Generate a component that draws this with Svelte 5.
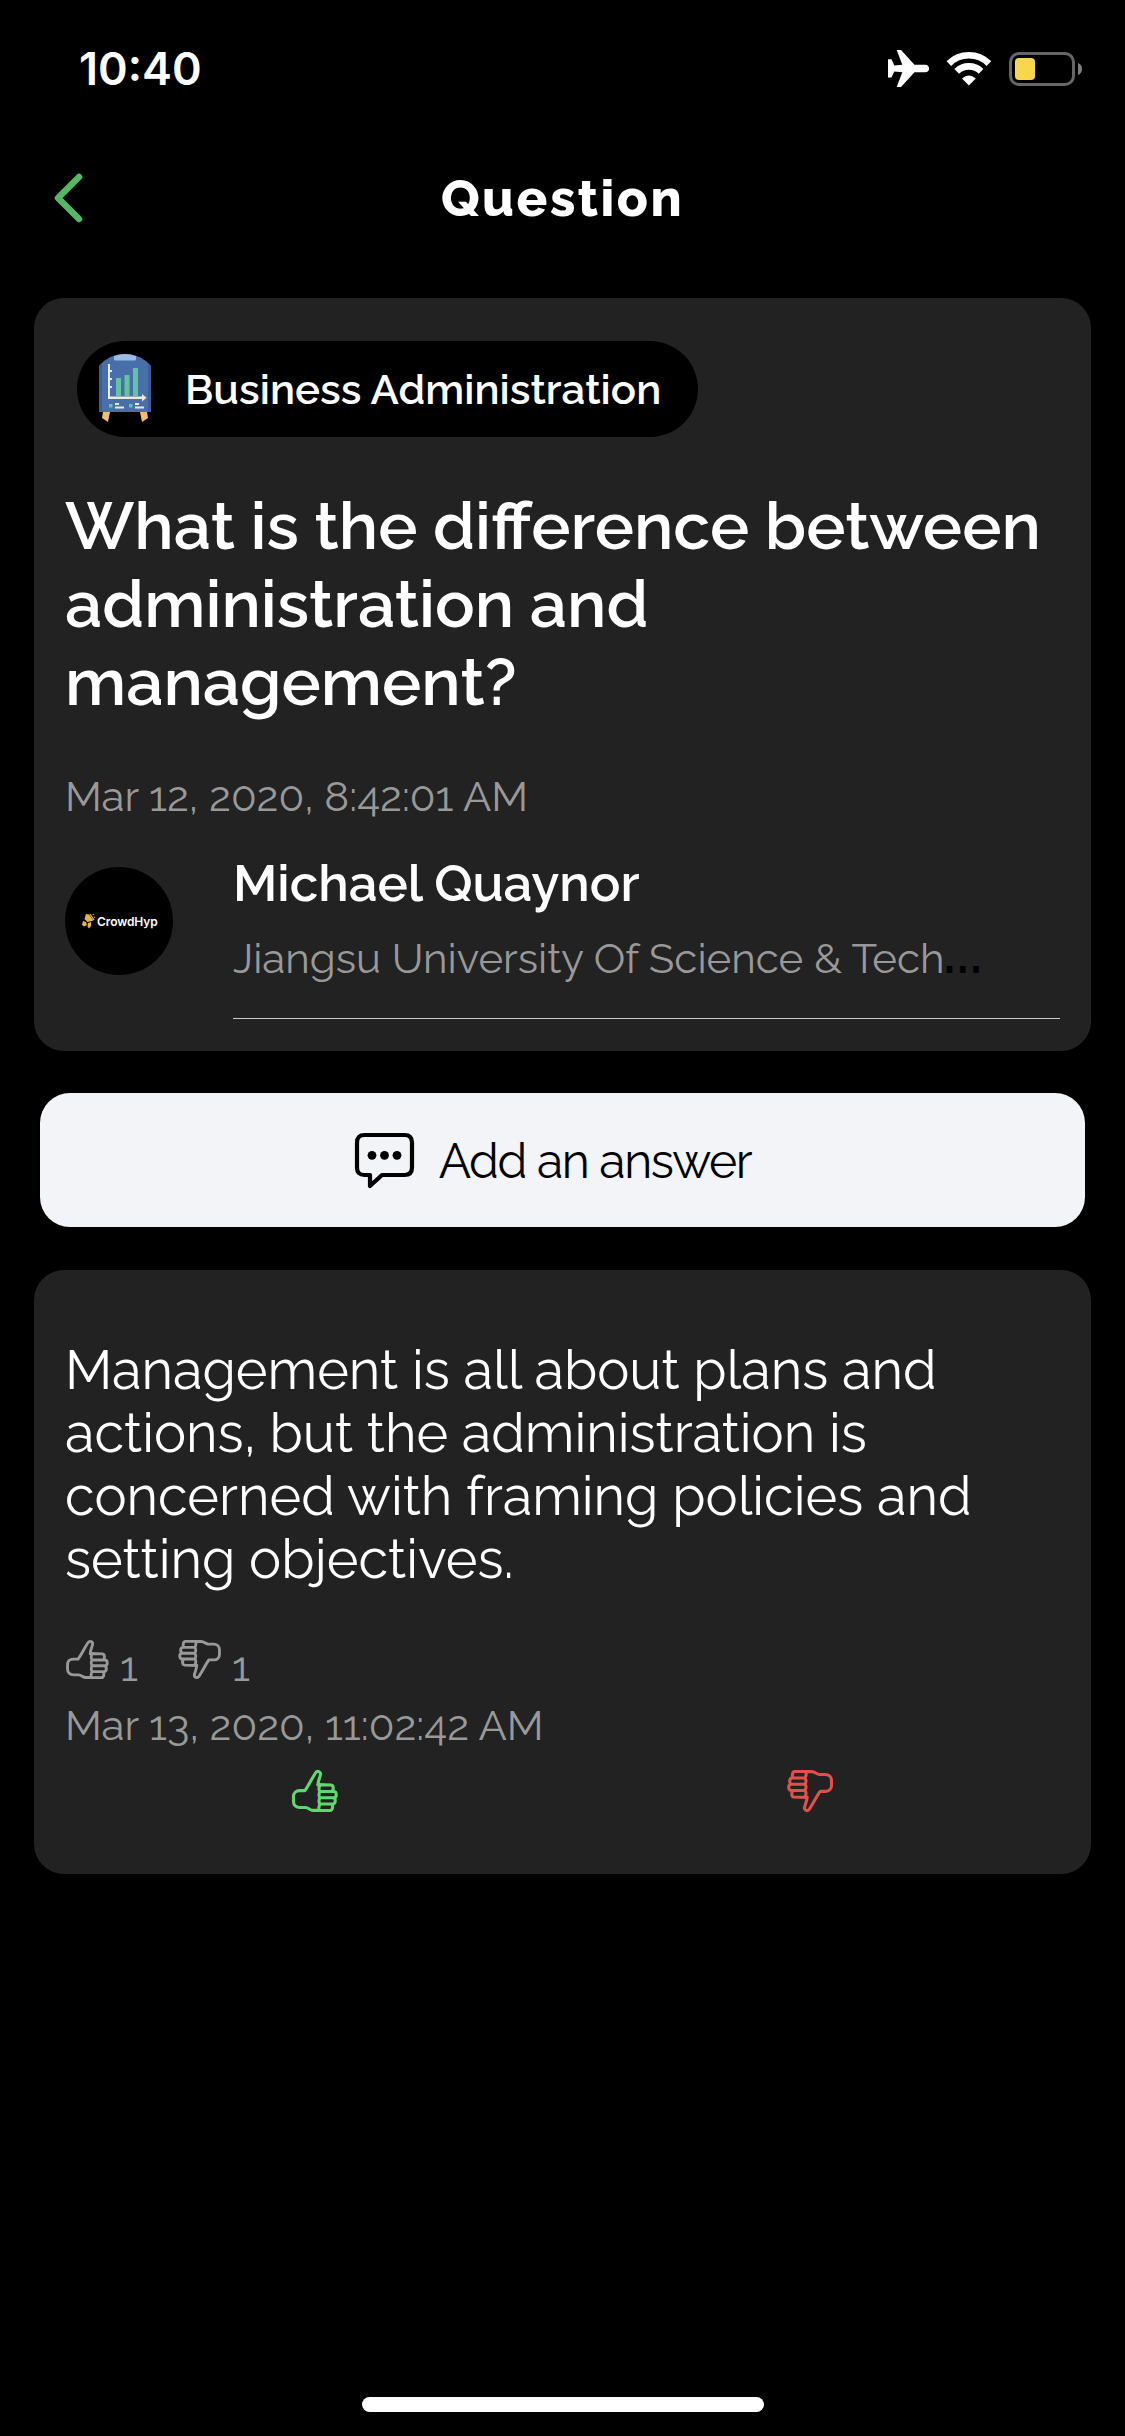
<script>
  const question = {
    category: 'Business Administration',
    lines: ['What is the difference between', 'administration and', 'management?'],
    date: 'Mar 12, 2020, 8:42:01 AM',
    author: 'Michael Quaynor',
    school: 'Jiangsu University Of Science & Tech'
  }

  const answer = {
    lines: [
      'Management is all about plans and',
      'actions, but the administration is',
      'concerned with framing policies and',
      'setting objectives.'
    ],
    date: 'Mar 13, 2020, 11:02:42 AM',
    likes: 1,
    dislikes: 1
  }
</script>

{#snippet thumb(kind)}
  <svg class="thumb {kind}" viewBox="0 0 46 42">
    <path d="M27.5 40.4H21c-3 0-4.500-2.900-7.500-2.900H8c-4 0-6.500-2.500-6.500-6v-5c0-3.500 2.500-5.900 6-5.900h5.300c2-2 6.200-10.600 10.700-17.600 2-3 5.500-1 5 1.500-.6 3-2.500 6-2.500 10.500" />
    <path d="M26 14.600l13 .4c3 .2 3 6.300 0 6.500H28.500c-2-.5-2-5.500 0-6.500M28.500 21.500H42c3 .3 3 6 0 6.200H28.500c-2-.7-2-5.200 0-6.200M28.500 27.700H41c3 .3 3 6 0 6.300H28.500c-2-.7-2-5.300 0-6.300M28.500 34H39c2.500.3 2 6.600-1 6.500H27.500c-1-1-1-5.500 1-6.500" />
  </svg>
{/snippet}

<div class="screen">
  <div class="status">
    <span class="time">10:40</span>
    <div class="indicators">
      <svg class="plane" viewBox="0 0 41 37">
        <path d="M26.500 14.700H37c5.500 0 5.500 7.600 0 7.600H26.500L13 37H8.700l5.600-14.700-8-.8L3.500 27.500H0V9.300h3.500l2.800 6.200 8-.8L8.700 0H13z" />
      </svg>
      <svg class="wifi" viewBox="0 0 46 34">
        <path class="arc" d="M2.900 11.600a28.300 28.300 0 0 1 40 0M10.700 19.400a17.300 17.300 0 0 1 24.400 0" />
        <path d="M16 26.500q6.900-6 13.800 0l-6.900 7z" />
      </svg>
      <svg class="battery" viewBox="0 0 74 34">
        <rect class="case" x="1.500" y="1.500" width="63" height="31" rx="8.500" />
        <rect class="level" x="6" y="6" width="20" height="22" rx="4" />
        <path class="nub" d="M69 11q4 1.500 4 6t-4 6z" />
      </svg>
    </div>
  </div>

  <header>
    <svg class="back" viewBox="0 0 30 50">
      <path d="M25 4L4 25l21 21" />
    </svg>
    <h1>Question</h1>
  </header>

  <section class="card question">
    <div class="category">
      <svg viewBox="0 0 52 68">
        <path fill="#f2bb77" d="M4 58h7l-2 10-6-4zM41 58h7l1 6-6 4z" />
        <path fill="#486fa9" d="M0 58V12Q10 0 26 0t26 12v46z" />
        <path fill="#3d5f96" d="M0 58V12l3-3v49zM49 9l3 3v46h-3z" />
        <path fill="#9bbbe3" d="M15 2q11-4 22 0v3q0 1.500-1.500 1.500h-19Q15 6.500 15 5z" />
        <path fill="#62c4a2" d="M17 24h5v18h-5zM25.500 21h5v21h-5zM34 14h5v28h-5zM10 50h3.500v3.500H10zM30 50h3.500v3.500H30z" />
        <path fill="#ece9dd" d="M9 10h2v32.500h32V40l4.500 3.700L43 47.500v-2.500H9zM11 16h2v2h-2zM11 24h2v2h-2zM11 32h2v2h-2zM16 49h4v2h-4zM16 52.500h9v2h-9zM36 49h4v2h-4zM36 52.500h9v2h-9z" />
      </svg>
      <span>{question.category}</span>
    </div>
    <h2>
      {#each question.lines as line}
        <span>{line}</span>
      {/each}
    </h2>
    <p class="date">{question.date}</p>
    <div class="author">
      <div class="avatar">
        <svg viewBox="0 0 14 16">
          <path d="M4 1l3 .5 4.500 6-6 1.500-3-3zM1 8l3 1 1 3-3 1.500L0 12zM6 10l3-1v4l-2 2.500-1.500-2z" />
          <path class="spark" d="M8 1l4 6M11 1l.5 1M13 4l-1 .5" />
        </svg>
        <span>CrowdHyp</span>
      </div>
      <div class="details">
        <p class="name">{question.author}</p>
        <p class="school">{question.school}<b>...</b></p>
      </div>
    </div>
  </section>

  <button>
    <svg viewBox="0 0 59 56">
      <path d="M9.500 2h40q7.500 0 7.500 7.500v25q0 7.500-7.500 7.500H27L15 53V42H9.500Q2 42 2 34.500v-25Q2 2 9.500 2z" />
      <circle cx="17" cy="22.300" r="4.400" />
      <circle cx="29.500" cy="22.300" r="4.400" />
      <circle cx="42" cy="22.300" r="4.400" />
    </svg>
    <span>Add an answer</span>
  </button>

  <section class="card answer">
    <p class="body">
      {#each answer.lines as line}
        <span>{line}</span>
      {/each}
    </p>
    <div class="votes">
      {@render thumb('up')}
      <span>{answer.likes}</span>
      {@render thumb('down')}
      <span>{answer.dislikes}</span>
    </div>
    <p class="date">{answer.date}</p>
    <div class="actions">
      <div class="like">{@render thumb('up')}</div>
      <div class="dislike">{@render thumb('down')}</div>
    </div>
  </section>

  <div class="home"></div>
</div>

<style>
  :global(body) {
    background: #000;
  }

  .screen {
    box-sizing: border-box;
    display: flex;
    flex-direction: column;
    width: 1125px;
    height: 2436px;
    background: #000;
    color: #fff;
    font-family: Raleway, Lato, sans-serif;
  }

  h1, h2, p {
    margin: 0;
  }

  svg {
    display: block;
    flex: none;
    overflow: visible;
  }

  .status {
    display: flex;
    align-items: center;
    justify-content: space-between;
    height: 137px;
    padding: 0 42px 0 79px;
  }

  .time {
    font: 600 45px Inter, sans-serif;
  }

  .indicators {
    display: flex;
    align-items: center;
    fill: #fff;
  }

  .plane {
    width: 41px;
    height: 37px;
    margin-right: 17px;
  }

  .wifi {
    width: 46px;
    height: 34px;
    margin-right: 17px;
  }

  .arc {
    fill: none;
    stroke: #fff;
    stroke-width: 6.6;
  }

  .battery {
    width: 74px;
    height: 34px;
  }

  .case {
    fill: none;
    stroke: #666;
    stroke-width: 3;
  }

  .level {
    fill: #f8d74a;
  }

  .nub {
    fill: #808080;
  }

  header {
    display: grid;
    grid-template-columns: 100px 1fr 100px;
    align-items: center;
    height: 122px;
  }

  .back {
    width: 30px;
    height: 50px;
    margin-left: 54px;
    fill: none;
    stroke: #53b965;
    stroke-width: 6.5;
    stroke-linecap: round;
    stroke-linejoin: round;
  }

  h1 {
    font-size: 51px;
    font-weight: 800;
    line-height: 60px;
    letter-spacing: 2.5px;
    text-align: center;
  }

  .card {
    box-sizing: border-box;
    margin: 0 34px;
    padding: 0 31px;
    border-radius: 30px;
    background: #222;
  }

  .question {
    height: 753px;
    margin-top: 39px;
    padding-top: 43px;
  }

  .category {
    box-sizing: border-box;
    display: flex;
    align-items: center;
    width: 621px;
    height: 96px;
    margin-left: 12px;
    padding-left: 22px;
    border-radius: 48px;
    background: #000;
    font-size: 42px;
    font-weight: 600;
    line-height: 50px;
    white-space: nowrap;
  }

  .category svg {
    width: 52px;
    height: 68px;
    margin: 0 34px 2px 0;
  }

  .category span {
    padding-top: 2px;
    letter-spacing: .06px;
  }

  h2 {
    margin-top: 50px;
    font-size: 66px;
    font-weight: 600;
    line-height: 78px;
    word-spacing: -.7px;
  }

  h2 span, .body span {
    display: block;
    white-space: nowrap;
  }

  .date {
    margin-top: 51px;
    color: #999;
    font-size: 42px;
    line-height: 50px;
  }

  .author {
    display: flex;
    margin-top: 31px;
  }

  .avatar {
    box-sizing: border-box;
    display: flex;
    align-items: center;
    flex: none;
    width: 108px;
    height: 108px;
    margin: 14px 60px 0 0;
    padding-left: 17px;
    border-radius: 50%;
    background: #000;
    font: 600 12px Inter, sans-serif;
    letter-spacing: -.1px;
  }

  .avatar svg {
    width: 14px;
    height: 16px;
    margin-right: 1px;
    fill: #e8b44a;
  }

  .spark {
    fill: none;
    stroke: #e8b44a;
    stroke-width: 1.3;
  }

  .details {
    flex: 1;
    border-bottom: 1px solid #ccc;
    padding-bottom: 34px;
    white-space: nowrap;
  }

  .name {
    font-size: 51px;
    font-weight: 600;
    line-height: 60px;
  }

  .school {
    margin-top: 21px;
    color: #999;
    font-size: 42px;
    line-height: 50px;
  }

  .school b {
    color: #000;
    font-weight: 800;
    letter-spacing: 3.2px;
  }

  button {
    display: flex;
    align-items: center;
    justify-content: center;
    height: 134px;
    margin: 42px 40px 43px;
    padding: 2px 19px 0 0;
    border: 0;
    border-radius: 30px;
    background: #f3f4f7;
    color: #000;
    font: inherit;
    font-size: 48px;
    letter-spacing: -1.35px;
  }

  button svg {
    width: 59px;
    height: 56px;
    margin-right: 25px;
  }

  button path {
    fill: none;
    stroke: #000;
    stroke-width: 4.2;
    stroke-linejoin: round;
  }

  .answer {
    height: 604px;
    padding-top: 69px;
  }

  .body {
    font-size: 54px;
    line-height: 63px;
  }

  .votes {
    display: flex;
    height: 50px;
    margin-top: 49px;
    padding-left: 1px;
    color: #999;
    font-size: 42px;
    line-height: 53px;
  }

  .votes span {
    width: 58px;
    padding-left: 11px;
  }

  .thumb {
    width: 46px;
    height: 42px;
    fill: none;
    stroke: currentColor;
    stroke-width: 3.1;
    stroke-linecap: round;
    stroke-linejoin: round;
  }

  .votes .thumb {
    width: 43px;
    height: 39px;
  }

  .down {
    transform: rotate(180deg);
  }

  .answer .date {
    margin-top: 11px;
  }

  .actions {
    display: grid;
    grid-template-columns: 1fr 1fr;
    justify-items: center;
    margin-top: 19px;
  }

  .like {
    padding-left: 2px;
    color: #5fd86f;
  }

  .dislike {
    padding-right: 2px;
    color: #e2504a;
  }

  .home {
    align-self: center;
    width: 402px;
    height: 15px;
    margin: auto 0 24px;
    border-radius: 8px;
    background: #fff;
  }
</style>
